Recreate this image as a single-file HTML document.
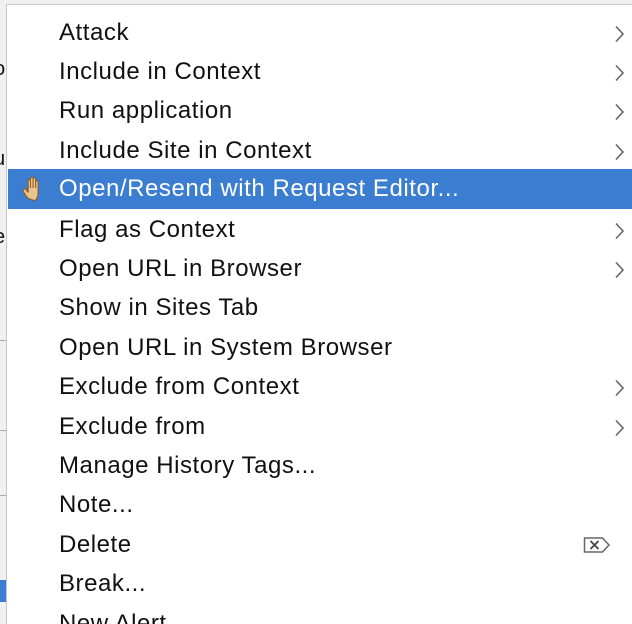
<!DOCTYPE html><html><head><style>
html,body{margin:0;width:632px;height:624px;overflow:hidden}
body{background:#f0f0f0;position:relative;font-family:"Liberation Sans",sans-serif}
#menu{position:absolute;left:6px;top:4px;width:626px;height:620px;background:#fff;border-left:1px solid #c8c8c8;border-top:1px solid #c8c8c8;overflow:hidden}
.r{position:absolute;left:1px;width:640px;height:39.4px;line-height:39.4px;font-size:24px;color:#111;letter-spacing:0.55px}
.r span{position:absolute;left:51px}
.hl{background:#3b7dd0;color:#fff}
.ch{position:absolute;left:606px;top:12px}
.bg{position:absolute;font-size:20px;color:#111}
</style></head><body>
<div class="bg" style="left:-6px;top:58px">o</div>
<div class="bg" style="left:-4px;top:100px">I</div>
<div class="bg" style="left:-6px;top:148px">u</div>
<div class="bg" style="left:-6px;top:226px">e</div>
<div style="position:absolute;left:0;top:340px;width:6px;height:1px;background:#aaa"></div>
<div style="position:absolute;left:0;top:430px;width:6px;height:1px;background:#aaa"></div>
<div style="position:absolute;left:0;top:495px;width:6px;height:1px;background:#aaa"></div>
<div style="position:absolute;left:0;top:580px;width:6px;height:22px;background:#3b7dd0"></div>
<div id="menu">
<div class="r" style="top:7.5px"><span>Attack</span><svg class="ch" width="12" height="18"><path d="M2 1.5l7 7.5-7 7.5" stroke="#666" stroke-width="1.6" fill="none"/></svg></div>
<div class="r" style="top:46.9px"><span>Include in Context</span><svg class="ch" width="12" height="18"><path d="M2 1.5l7 7.5-7 7.5" stroke="#666" stroke-width="1.6" fill="none"/></svg></div>
<div class="r" style="top:86.3px"><span>Run application</span><svg class="ch" width="12" height="18"><path d="M2 1.5l7 7.5-7 7.5" stroke="#666" stroke-width="1.6" fill="none"/></svg></div>
<div class="r" style="top:125.7px"><span>Include Site in Context</span><svg class="ch" width="12" height="18"><path d="M2 1.5l7 7.5-7 7.5" stroke="#666" stroke-width="1.6" fill="none"/></svg></div>
<div class="r hl" style="top:164px;height:40px"><svg style="position:absolute;left:13px;top:6px" width="26" height="28" viewBox="0 0 22 24"><path d="M6 20C3 17 1 13 2 12c1-1 3 1 4 3V5c0-1.5 2-1.5 2 0v6V3c0-1.5 2.2-1.5 2.2 0v8V3.5c0-1.5 2.2-1.5 2.2 0V11V6c0-1.5 2.1-1.5 2.1 0v9c0 3-1 6-3 7z" fill="#e8c48e" stroke="#8a5a20" stroke-width="0.9"/></svg><span>Open/Resend with Request Editor...</span></div>
<div class="r" style="top:204.5px"><span>Flag as Context</span><svg class="ch" width="12" height="18"><path d="M2 1.5l7 7.5-7 7.5" stroke="#666" stroke-width="1.6" fill="none"/></svg></div>
<div class="r" style="top:243.9px"><span>Open URL in Browser</span><svg class="ch" width="12" height="18"><path d="M2 1.5l7 7.5-7 7.5" stroke="#666" stroke-width="1.6" fill="none"/></svg></div>
<div class="r" style="top:283.3px"><span>Show in Sites Tab</span></div>
<div class="r" style="top:322.7px"><span>Open URL in System Browser</span></div>
<div class="r" style="top:362.1px"><span>Exclude from Context</span><svg class="ch" width="12" height="18"><path d="M2 1.5l7 7.5-7 7.5" stroke="#666" stroke-width="1.6" fill="none"/></svg></div>
<div class="r" style="top:401.5px"><span>Exclude from</span><svg class="ch" width="12" height="18"><path d="M2 1.5l7 7.5-7 7.5" stroke="#666" stroke-width="1.6" fill="none"/></svg></div>
<div class="r" style="top:440.9px"><span>Manage History Tags...</span></div>
<div class="r" style="top:480.3px"><span>Note...</span></div>
<div class="r" style="top:519.7px"><span>Delete</span><svg style="position:absolute;left:575px;top:11px" width="28" height="18"><path d="M1.5 2h18l6.5 7-6.5 7h-18z" stroke="#666" stroke-width="1.5" fill="none"/><path d="M7.5 5l8 8M15.5 5l-8 8" stroke="#444" stroke-width="1.8"/></svg></div>
<div class="r" style="top:559.1px"><span>Break...</span></div>
<div class="r" style="top:598.5px"><span>New Alert</span></div>
</div>
</body></html>
